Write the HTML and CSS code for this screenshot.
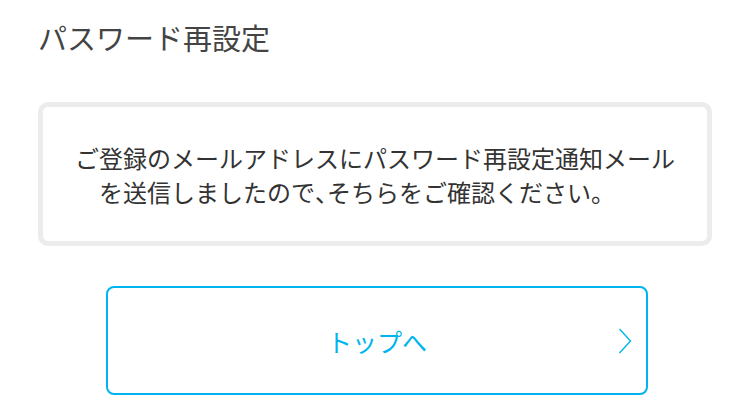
FILE: index.html
```html
<!DOCTYPE html>
<html lang="ja">
<head>
    <meta charset="UTF-8">
    <meta name="viewport" content="width=device-width, initial-scale=1.0">
    <title>パスワード再設定</title>
    <link rel="stylesheet" href="styles.css">
</head>
<body>
    <div class="page">
        <h1 class="title">パスワード再設定</h1>

        <div class="notice">
            <p>ご登録のメールアドレスにパスワード再設定通知メールを送信しましたので<span class="half">、</span>そちらをご確認ください。</p>
        </div>

        <a class="top-btn" href="#">
            <span>トップへ</span>
            <svg class="chevron" width="14" height="26" viewBox="0 0 14 26">
                <polyline points="1.5,1 12.5,13 1.5,25" fill="none" stroke="#00b4ef" stroke-width="1.4"/>
            </svg>
        </a>
    </div>
</body>
</html>
```

FILE: styles.css
```css
body {
    margin: 0;
    background-color: #fff;
    font-family: "Noto Sans CJK JP", "Noto Sans", sans-serif;
    color: #333;
}

.page {
    padding: 17px 38px 0;
}

.title {
    margin: 0;
    font-size: 29px;
    font-weight: normal;
    line-height: 40px;
    color: #444;
}

.notice {
    margin-top: 45px;
    border: 5px solid #ececec;
    border-radius: 10px;
    padding: 34px 30px 32px 32px;
}

.notice p {
    margin: 0;
    font-size: 24px;
    line-height: 34px;
    padding-left: 24px;
    text-indent: -24px;
    color: #333;
}

/* 読点を半角幅に */
.half {
    font-feature-settings: "halt";
}

.top-btn {
    position: relative;
    display: flex;
    justify-content: center;
    align-items: center;
    width: 542px;
    height: 109px;
    box-sizing: border-box;
    margin: 40px 0 0 68px;
    border: 2px solid #00b4ef;
    border-radius: 8px;
    color: #00b4ef;
    font-size: 25px;
    text-decoration: none;
}

/* 右端の矢印 */
.chevron {
    position: absolute;
    right: 14px;
    top: 50%;
    margin-top: -13px;
}
```
